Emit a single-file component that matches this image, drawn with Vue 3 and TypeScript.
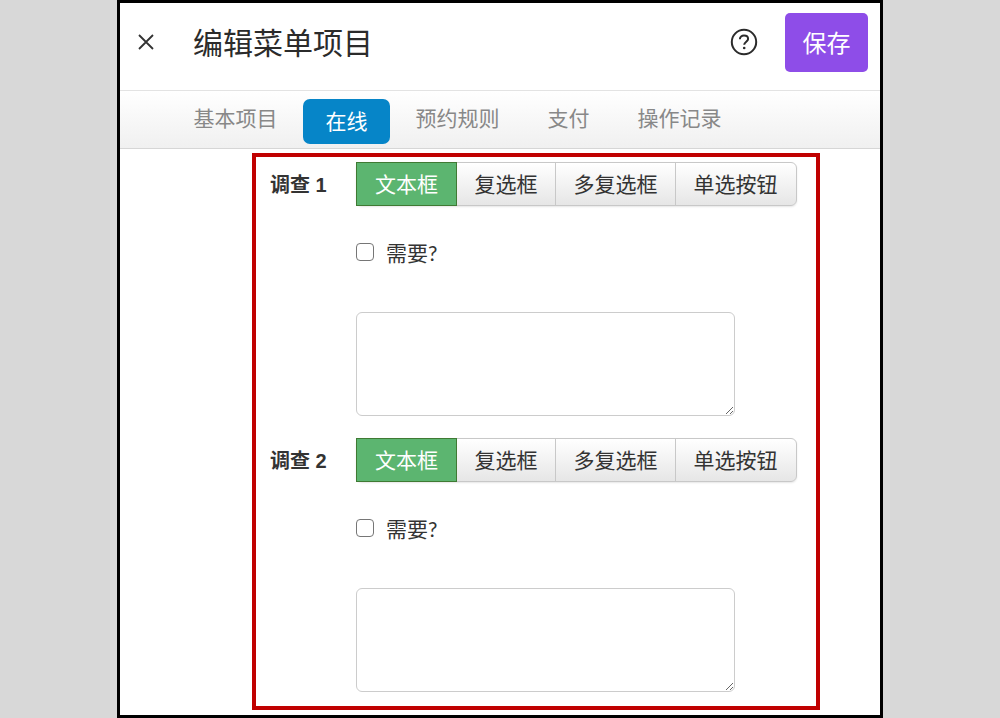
<template>
  <div class="frame">
    <header class="top-bar">
      <button class="close-btn" aria-label="close">
        <svg width="16" height="16" viewBox="0 0 16 16">
          <path d="M1 1 L15 15 M15 1 L1 15" stroke="#333" stroke-width="1.8" fill="none" />
        </svg>
      </button>
      <h1 class="title">编辑菜单项目</h1>
      <svg class="help-icon" width="28" height="28" viewBox="0 0 28 28">
        <circle cx="14" cy="14" r="12.2" stroke="#2b2b2b" stroke-width="2" fill="none" />
        <path d="M9.9 11.2 C9.9 8.8 11.8 7.6 14 7.6 C16.3 7.6 18.1 8.9 18.1 11 C18.1 13.6 14.2 13.9 14.2 16.8" stroke="#2b2b2b" stroke-width="2" fill="none" />
        <circle cx="14.2" cy="20" r="1.3" fill="#2b2b2b" />
      </svg>
      <button class="save-btn">保存</button>
    </header>

    <nav class="tabs">
      <span
        v-for="tab in tabs"
        :key="tab"
        class="tab"
        :class="{ active: tab === activeTab }"
      >{{ tab }}</span>
    </nav>

    <div class="content">
      <section class="survey-box">
        <div v-for="survey in surveys" :key="survey" class="survey">
          <label class="survey-label">{{ survey }}</label>
          <div class="survey-fields">
            <div class="btn-group">
              <button
                v-for="type in types"
                :key="type"
                class="type-btn"
                :class="{ selected: type === '文本框' }"
              >{{ type }}</button>
            </div>
            <label class="required">
              <input type="checkbox" class="required-check" />
              <span>需要?</span>
            </label>
            <textarea class="answer"></textarea>
          </div>
        </div>
      </section>
    </div>
  </div>
</template>

<script setup lang="ts">
const tabs: string[] = ['基本项目', '在线', '预约规则', '支付', '操作记录'];
const activeTab = '在线';
const surveys: string[] = ['调查 1', '调查 2'];
const types: string[] = ['文本框', '复选框', '多复选框', '单选按钮'];
</script>

<style>
html,
body {
  margin: 0;
  background: #d8d8d8;
}
</style>

<style scoped>
.frame {
  box-sizing: border-box;
  width: 766px;
  height: 718px;
  margin-left: 117px;
  border: 3px solid #000;
  background: #fff;
  overflow: hidden;
  font-family: "Liberation Sans", "Noto Sans CJK SC", sans-serif;
  color: #333;
}

.top-bar {
  display: flex;
  align-items: center;
  box-sizing: border-box;
  height: 88px;
  padding: 0 12px 9px 18px;
  border-bottom: 1px solid #e3e3e3;
}

.close-btn {
  display: flex;
  width: 16px;
  height: 16px;
  padding: 0;
  border: none;
  background: none;
}

.title {
  flex: 1;
  margin: 3px 0 0 39px;
  font-size: 30px;
  line-height: 40px;
  font-weight: 400;
  color: #2b2b2b;
}

.help-icon {
  margin-right: 27px;
}

.save-btn {
  width: 83px;
  height: 59px;
  padding: 0 0 2px;
  border: none;
  border-radius: 5px;
  background: #8e4de8;
  color: #fff;
  font-family: inherit;
  font-size: 24px;
}

.tabs {
  display: flex;
  align-items: flex-start;
  gap: 3px;
  box-sizing: border-box;
  height: 58px;
  padding: 8px 0 0 51px;
  border-bottom: 1px solid #d6d6d6;
  background: linear-gradient(#fff, #f0f0f0);
}

.tab {
  padding: 0 22.5px;
  height: 45px;
  line-height: 40px;
  font-size: 21px;
  color: #888;
  border-radius: 7px;
}

.tab.active {
  background: #0685c8;
  color: #fff;
  line-height: 45px;
}

.content {
  padding: 4px 60px 0 132px;
}

.survey-box {
  box-sizing: border-box;
  width: 568px;
  height: 557px;
  padding: 5px 0 0 14px;
  border: 4px solid #c00000;
}

.survey {
  display: flex;
  margin-bottom: 22px;
}

.survey-label {
  width: 86px;
  padding-top: 12px;
  font-size: 20px;
  line-height: 22px;
  font-weight: 700;
  color: #333;
}

.survey-fields {
  display: flex;
  flex-direction: column;
  align-items: flex-start;
}

.btn-group {
  display: flex;
  height: 44px;
  border-radius: 6px;
  box-shadow: 0 1px 2px rgba(0, 0, 0, 0.1);
}

.type-btn {
  box-sizing: border-box;
  height: 44px;
  padding: 0 17.5px 2px;
  margin-left: -1px;
  border: 1px solid #c8c8c8;
  background: linear-gradient(#fff, #e6e6e6);
  font-family: inherit;
  font-size: 21px;
  color: #333;
}

.type-btn:first-child {
  margin-left: 0;
}

.type-btn:last-child {
  padding-right: 18.5px;
  border-radius: 0 6px 6px 0;
}

.type-btn.selected {
  position: relative;
  z-index: 1;
  width: 101px;
  padding: 0 0 2px;
  border-color: #3f7a33;
  background: #5cb570;
  color: #fff;
}

.required {
  display: flex;
  align-items: center;
  gap: 12px;
  height: 28px;
  margin-top: 32px;
  font-family: "Lato", "Noto Sans CJK SC", sans-serif;
  font-size: 21px;
  color: #333;
}

.required-check {
  appearance: none;
  box-sizing: border-box;
  width: 18px;
  height: 18px;
  margin: 0;
  border: 1.5px solid #767676;
  border-radius: 4px;
  background: #fff;
}

.answer {
  display: block;
  box-sizing: border-box;
  width: 379px;
  height: 104px;
  margin-top: 46px;
  border: 1px solid #ccc;
  border-radius: 6px;
  outline: none;
  background: #fff;
}
</style>
